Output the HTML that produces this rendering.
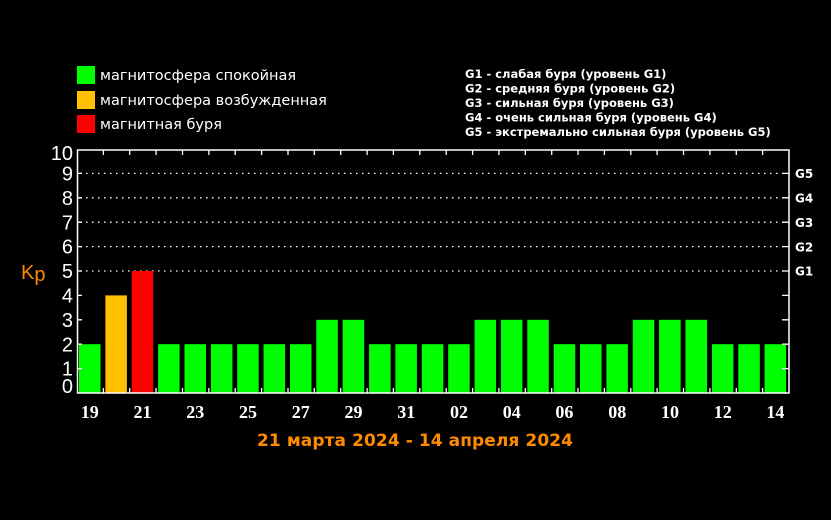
<!DOCTYPE html>
<html><head><meta charset="utf-8"><style>
html,body{margin:0;padding:0;background:#000;width:831px;height:520px;overflow:hidden}
</style></head><body>
<svg width="831" height="520" viewBox="0 0 831 520" xmlns="http://www.w3.org/2000/svg">
<rect width="831" height="520" fill="#000"/>
<!-- legend -->
<rect x="77" y="66" width="18" height="18" fill="#00ff00"/>
<rect x="77" y="91" width="18" height="18" fill="#ffc000"/>
<rect x="77" y="115" width="18" height="18" fill="#ff0000"/>
<g font-family="DejaVu Sans, Liberation Sans, sans-serif" font-size="14.5" fill="#fff">
<text x="100" y="80">магнитосфера спокойная</text>
<text x="100" y="105">магнитосфера возбужденная</text>
<text x="100" y="129">магнитная буря</text>
</g>
<g font-family="DejaVu Sans, Liberation Sans, sans-serif" font-size="11.5" font-weight="bold" fill="#fff">
<text x="465" y="78">G1 - слабая буря (уровень G1)</text>
<text x="465" y="92.5">G2 - средняя буря (уровень G2)</text>
<text x="465" y="107">G3 - сильная буря (уровень G3)</text>
<text x="465" y="121.5">G4 - очень сильная буря (уровень G4)</text>
<text x="465" y="136">G5 - экстремально сильная буря (уровень G5)</text>
</g>
<!-- grid -->
<g stroke="#fff" stroke-width="1.3" stroke-dasharray="1.5 4.5">
<line x1="80" y1="173.4" x2="783" y2="173.4"/>
<line x1="80" y1="197.8" x2="783" y2="197.8"/>
<line x1="80" y1="222.2" x2="783" y2="222.2"/>
<line x1="80" y1="246.6" x2="783" y2="246.6"/>
<line x1="80" y1="271" x2="783" y2="271"/>
</g>
<!-- bars -->
<g>
<rect x="79" y="344.2" width="21.5" height="48.8" fill="#00ff00"/>
<rect x="105.4" y="295.4" width="21.5" height="97.6" fill="#ffc000"/>
<rect x="131.7" y="271" width="21.5" height="122" fill="#ff0000"/>
<g fill="#00ff00">
<rect x="158.1" y="344.2" width="21.5" height="48.8"/>
<rect x="184.5" y="344.2" width="21.5" height="48.8"/>
<rect x="210.9" y="344.2" width="21.5" height="48.8"/>
<rect x="237.2" y="344.2" width="21.5" height="48.8"/>
<rect x="263.6" y="344.2" width="21.5" height="48.8"/>
<rect x="290" y="344.2" width="21.5" height="48.8"/>
<rect x="316.3" y="319.8" width="21.5" height="73.2"/>
<rect x="342.7" y="319.8" width="21.5" height="73.2"/>
<rect x="369.1" y="344.2" width="21.5" height="48.8"/>
<rect x="395.4" y="344.2" width="21.5" height="48.8"/>
<rect x="421.8" y="344.2" width="21.5" height="48.8"/>
<rect x="448.2" y="344.2" width="21.5" height="48.8"/>
<rect x="474.6" y="319.8" width="21.5" height="73.2"/>
<rect x="500.9" y="319.8" width="21.5" height="73.2"/>
<rect x="527.3" y="319.8" width="21.5" height="73.2"/>
<rect x="553.7" y="344.2" width="21.5" height="48.8"/>
<rect x="580" y="344.2" width="21.5" height="48.8"/>
<rect x="606.4" y="344.2" width="21.5" height="48.8"/>
<rect x="632.8" y="319.8" width="21.5" height="73.2"/>
<rect x="659.1" y="319.8" width="21.5" height="73.2"/>
<rect x="685.5" y="319.8" width="21.5" height="73.2"/>
<rect x="711.9" y="344.2" width="21.5" height="48.8"/>
<rect x="738.3" y="344.2" width="21.5" height="48.8"/>
<rect x="764.6" y="344.2" width="21.5" height="48.8"/>
</g>
</g>
<!-- frame -->
<rect x="77.5" y="150" width="711.5" height="243" fill="none" stroke="#fff" stroke-width="1.5"/>
<!-- ticks -->
<g stroke="#fff" stroke-width="1.3">
<path d="M103.4 150v5M129.7 150v5M156.1 150v5M182.5 150v5M208.9 150v5M235.2 150v5M261.6 150v5M288 150v5M314.3 150v5M340.7 150v5M367.1 150v5M393.4 150v5M419.8 150v5M446.2 150v5M472.6 150v5M498.9 150v5M525.3 150v5M551.7 150v5M578 150v5M604.4 150v5M630.8 150v5M657.1 150v5M683.5 150v5M709.9 150v5M736.3 150v5M762.6 150v5"/>
<path d="M103.4 393v-5M129.7 393v-5M156.1 393v-5M182.5 393v-5M208.9 393v-5M235.2 393v-5M261.6 393v-5M288 393v-5M314.3 393v-5M340.7 393v-5M367.1 393v-5M393.4 393v-5M419.8 393v-5M446.2 393v-5M472.6 393v-5M498.9 393v-5M525.3 393v-5M551.7 393v-5M578 393v-5M604.4 393v-5M630.8 393v-5M657.1 393v-5M683.5 393v-5M709.9 393v-5M736.3 393v-5M762.6 393v-5"/>
<path d="M77 173.4h5M77 197.8h5M77 222.2h5M77 246.6h5M77 271h5M77 295.4h5M77 319.8h5M77 344.2h5M77 368.6h5"/>
<path d="M789 173.4h-7M789 197.8h-7M789 222.2h-7M789 246.6h-7M789 271h-7M789 295.4h-7M789 319.8h-7M789 344.2h-7M789 368.6h-7"/>
</g>
<!-- y labels -->
<g font-family="Liberation Sans, sans-serif" font-size="20" fill="#fff" text-anchor="end">
<text x="73" y="160">10</text>
<text x="73" y="180.5">9</text>
<text x="73" y="204.9">8</text>
<text x="73" y="229.3">7</text>
<text x="73" y="253.7">6</text>
<text x="73" y="278.1">5</text>
<text x="73" y="302.5">4</text>
<text x="73" y="326.9">3</text>
<text x="73" y="351.3">2</text>
<text x="73" y="375.7">1</text>
<text x="73" y="393">0</text>
</g>
<text x="21" y="279" font-family="Liberation Sans, sans-serif" font-size="20" fill="#ff8c00">K<tspan font-size="20" dy="2">p</tspan></text>
<g font-family="DejaVu Sans, sans-serif" font-size="12" font-weight="bold" fill="#fff">
<text x="795" y="178">G5</text>
<text x="795" y="202.5">G4</text>
<text x="795" y="227">G3</text>
<text x="795" y="251.5">G2</text>
<text x="795" y="275.5">G1</text>
</g>
<!-- x labels -->
<g font-family="Liberation Serif, serif" font-size="18" font-weight="bold" fill="#fff" text-anchor="middle">
<text x="89.8" y="418">19</text>
<text x="142.5" y="418">21</text>
<text x="195.2" y="418">23</text>
<text x="248" y="418">25</text>
<text x="300.8" y="418">27</text>
<text x="353.5" y="418">29</text>
<text x="406.2" y="418">31</text>
<text x="459" y="418">02</text>
<text x="511.7" y="418">04</text>
<text x="564.4" y="418">06</text>
<text x="617.2" y="418">08</text>
<text x="670" y="418">10</text>
<text x="722.7" y="418">12</text>
<text x="775.4" y="418">14</text>
</g>
<text x="415" y="446" text-anchor="middle" textLength="316" font-family="DejaVu Sans, Liberation Sans, sans-serif" font-size="17" font-weight="bold" fill="#ff8c00">21 марта 2024 - 14 апреля 2024</text>
</svg>
</body></html>
